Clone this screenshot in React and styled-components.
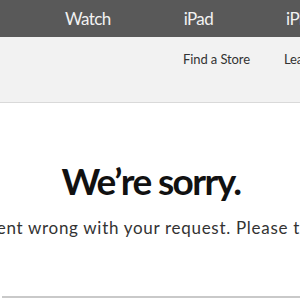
import React from 'react'
import styled, { createGlobalStyle } from 'styled-components'

const GlobalStyle = createGlobalStyle`
  html, body {
    margin: 0;
    padding: 0;
    background: #fff;
    overflow: hidden;
  }
  body {
    font-family: Lato, "Open Sans", "Liberation Sans", sans-serif;
    -webkit-font-smoothing: antialiased;
  }
`

const Page = styled.div`
  width: 100%;
  min-height: 300px;
  display: flex;
  flex-direction: column;
`

const GlobalNav = styled.nav`
  height: 37px;
  background: #595959;
  display: flex;
  align-items: center;
  padding-left: 65px;
  gap: 73px;
  overflow: hidden;
  white-space: nowrap;
`

const NavItem = styled.a`
  color: #f2f2f2;
  font-size: 17px;
  letter-spacing: -0.6px;
  text-decoration: none;
  line-height: 1;
  flex-shrink: 0;
`

const SubNav = styled.div`
  height: 66px;
  background: #f2f2f2;
  border-bottom: 1px solid #d9d9d9;
  display: flex;
  align-items: flex-start;
  padding: 14px 0 0 183px;
  gap: 34px;
  overflow: hidden;
  white-space: nowrap;
  box-sizing: border-box;
`

const SubLink = styled.a`
  color: #333;
  font-size: 13px;
  letter-spacing: -0.1px;
  text-decoration: none;
  flex-shrink: 0;
`

const Content = styled.main`
  display: flex;
  flex-direction: column;
  align-items: center;
  padding-top: 55px;
  border-bottom: 2px solid #c9c9c9;
  height: 195px;
  box-sizing: border-box;
  margin-left: 2px;
`

const Heading = styled.h1`
  margin: 0;
  font-size: 37px;
  font-weight: 700;
  color: #111;
  letter-spacing: -1.6px;
  line-height: 46px;
  white-space: nowrap;
`

const Message = styled.p`
  margin: 13px 0 0;
  font-size: 17px;
  color: #333;
  white-space: nowrap;
  letter-spacing: 0.7px;
`

export default function App() {
  return (
    <Page>
      <GlobalStyle />
      <GlobalNav>
        <NavItem href="#">Watch</NavItem>
        <NavItem href="#">iPad</NavItem>
        <NavItem href="#">iPhone</NavItem>
        <NavItem href="#">Music</NavItem>
      </GlobalNav>
      <SubNav>
        <SubLink href="#">Find a Store</SubLink>
        <SubLink href="#">Learn More</SubLink>
      </SubNav>
      <Content>
        <Heading>We’re sorry.</Heading>
        <Message>Something went wrong with your request. Please try again later.</Message>
      </Content>
    </Page>
  )
}
